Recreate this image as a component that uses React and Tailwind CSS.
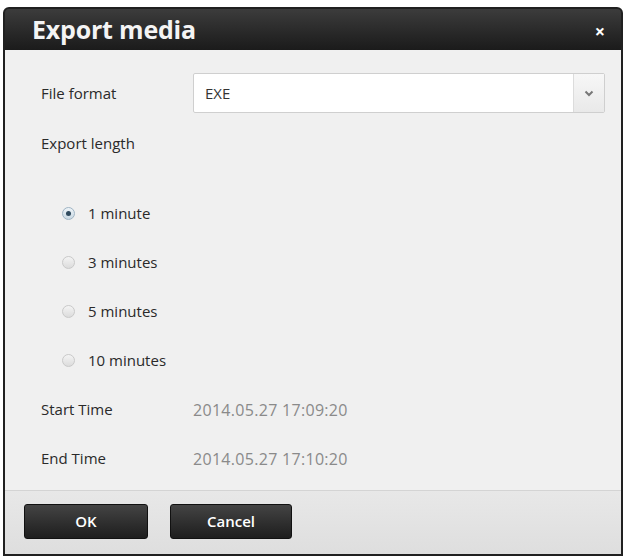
import { useState } from "react";

const lengths = ["1 minute", "3 minutes", "5 minutes", "10 minutes"];

function Radio({ checked, label, onSelect }) {
  return (
    <label className="flex h-[49px] cursor-pointer items-center pl-[21px]" onClick={onSelect}>
      <span
        className={
          checked
            ? "flex h-[13px] w-[13px] items-center justify-center rounded-full border border-[#9fb4c4] bg-gradient-to-b from-[#eef4f8] to-[#c9d8e3]"
            : "h-[13px] w-[13px] rounded-full border border-[#c9c9c9] bg-gradient-to-b from-[#f4f4f4] to-[#dcdcdc]"
        }
      >
        {checked && <span className="h-[5px] w-[5px] rounded-full bg-[#2f4a5e]" />}
      </span>
      <span className="ml-[13px] text-[15px] text-[#2a2a2a]">{label}</span>
    </label>
  );
}

export default function App() {
  const [length, setLength] = useState(0);

  return (
    <div className="h-[559px] w-[626px] bg-white pl-[3px] pt-[7px] font-['Open_Sans',sans-serif]">
      <div className="flex h-[549px] w-[620px] flex-col overflow-hidden rounded-t-[6px] border-2 border-[#202020] bg-[#202020]">
        {/* title bar */}
        <div className="flex h-[41px] shrink-0 items-center justify-between bg-gradient-to-b from-[#3c3c3c] to-[#1b1b1b] pl-[27px] pr-[16px]">
          <h1 className="text-[25px] font-bold tracking-[-0.2px] text-[#f4f4f4]">Export media</h1>
          <span className="mt-[3px] text-[18px] font-bold leading-none text-white">×</span>
        </div>

        {/* form body */}
        <div className="flex h-[440px] shrink-0 flex-col bg-[#f0f0f0] pl-[36px] pr-[16px] pt-[23px] text-[15px]">
          <div className="flex h-[40px] items-center">
            <span className="w-[152px] text-[#2a2a2a]">File format</span>
            <div className="flex h-[40px] flex-1 rounded-[2px] border border-[#cfcfcf] bg-white">
              <span className="flex flex-1 items-center pl-[11px] text-[15px] text-[#333]">EXE</span>
              <span className="flex w-[31px] items-center justify-center border-l border-[#dcdcdc] bg-gradient-to-b from-[#f7f7f7] to-[#e9e9e9]">
                <svg width="10" height="7" viewBox="0 0 10 7">
                  <path d="M1.5 1.5 L5 5 L8.5 1.5" fill="none" stroke="#777" strokeWidth="2" />
                </svg>
              </span>
            </div>
          </div>

          <div className="mt-[10px] flex h-[40px] items-center text-[#2a2a2a]">Export length</div>

          <div className="mt-[26px] flex flex-col">
            {lengths.map((l, i) => (
              <Radio key={l} label={l} checked={length === i} onSelect={() => setLength(i)} />
            ))}
          </div>

          <div className="flex h-[49px] items-center">
            <span className="w-[152px] text-[#2a2a2a]">Start Time</span>
            <span className="text-[16px] tracking-[0.3px] text-[#8a8a8a]">2014.05.27 17:09:20</span>
          </div>
          <div className="flex h-[49px] items-center">
            <span className="w-[152px] text-[#2a2a2a]">End Time</span>
            <span className="text-[16px] tracking-[0.3px] text-[#8a8a8a]">2014.05.27 17:10:20</span>
          </div>
        </div>

        {/* footer buttons */}
        <div className="flex flex-1 gap-[22px] border-t border-[#d4d4d4] bg-gradient-to-b from-[#e8e8e8] to-[#dedede] pl-[19px] pt-[13px]">
          <button className="h-[35px] w-[124px] rounded-[3px] border border-[#111] bg-gradient-to-b from-[#444] to-[#1e1e1e] text-[15px] font-semibold text-white">
            OK
          </button>
          <button className="h-[35px] w-[122px] rounded-[3px] border border-[#111] bg-gradient-to-b from-[#444] to-[#1e1e1e] text-[15px] font-semibold text-white">
            Cancel
          </button>
        </div>
      </div>
    </div>
  );
}
